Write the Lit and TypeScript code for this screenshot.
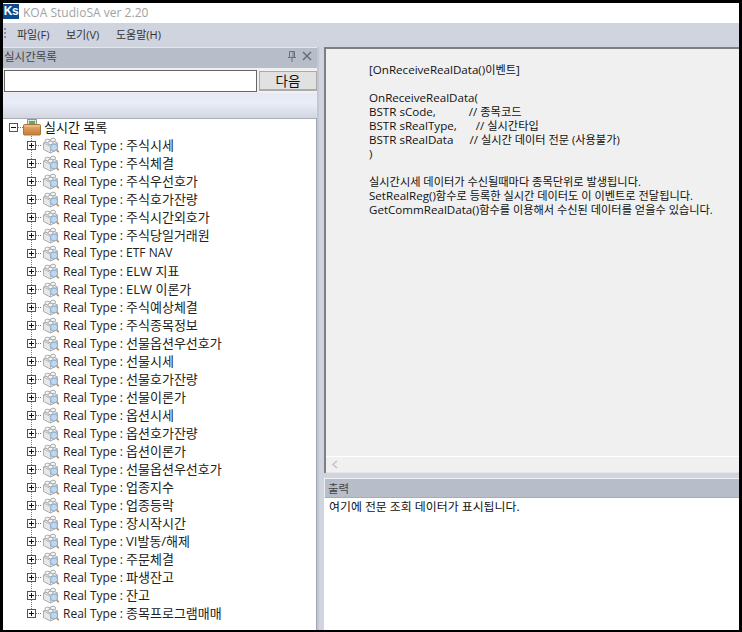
import { LitElement, html, css } from "lit";
import { customElement } from "lit/decorators.js";

const ITEMS = ["주식시세","주식체결","주식우선호가","주식호가잔량","주식시간외호가","주식당일거래원","ETF NAV","ELW 지표","ELW 이론가","주식예상체결","주식종목정보","선물옵션우선호가","선물시세","선물호가잔량","선물이론가","옵션시세","옵션호가잔량","옵션이론가","선물옵션우선호가","업종지수","업종등락","장시작시간","VI발동/해제","주문체결","파생잔고","잔고","종목프로그램매매"];

const gutter = (last: boolean) => html`<svg class="gutter" width="39" height="18" viewBox="0 0 39 18">
  <path d="M28.5 0V5M28.5 14V${last ? 14 : 18}M33 9.5H39" stroke="#777" stroke-dasharray="1 1" fill="none"/>
  <rect x="24.5" y="5.5" width="8" height="8" fill="#fff" stroke="#555"/>
  <path d="M26 9.5H31M28.5 7V12" stroke="#111" fill="none"/>
</svg>`;

const cube = html`<svg class="ic" width="18" height="18" viewBox="0 0 18 18">
  <path d="M1.5 7L8.5 3.5L15.5 7V13.5L8.5 17L1.5 13.5Z" fill="#e6e8ea" stroke="#a9abad"/>
  <path d="M1.5 7L8.5 10.5L15.5 7M8.5 10.5V17" fill="none" stroke="#b9bbbd"/>
  <ellipse cx="5.5" cy="5" rx="2.6" ry="1.8" fill="#f6f6f6" stroke="#a9abad"/>
  <ellipse cx="11" cy="4" rx="2.6" ry="1.8" fill="#f6f6f6" stroke="#a9abad"/>
  <ellipse cx="8.5" cy="7" rx="2.6" ry="1.8" fill="#f6f6f6" stroke="#a9abad"/>
  <circle cx="12" cy="11.5" r="3.6" fill="#bcd7f2" stroke="#8fa9c6"/>
  <path d="M14.8 14.3L16.8 16.3" stroke="#d3802c" stroke-width="1.6"/>
</svg>`;

const rootIcon = html`<svg class="ic" width="18" height="18" viewBox="0 0 18 18">
  <defs><linearGradient id="bx" x1="0" y1="0" x2="0" y2="1"><stop offset="0" stop-color="#e6ad6c"/><stop offset="1" stop-color="#c67c3c"/></linearGradient></defs>
  <rect x="4.5" y="1.5" width="9" height="8" fill="#dfe3e0" stroke="#8d9a8d"/>
  <rect x="6" y="3" width="6" height="5" fill="#58b05c"/>
  <rect x="0.5" y="6.5" width="17" height="10.5" rx="1" fill="url(#bx)" stroke="#a8753f"/>
  <path d="M1.5 8H16.5" stroke="#f3cd9c"/>
</svg>`;

const k = (t: string) => html`<span class="k">${t}</span>`;

@customElement("app-root")
export class AppRoot extends LitElement {
  static styles = css`
    :host { display: block; width: 742px; height: 632px; overflow: hidden;
      font-family: "Open Sans", "Noto Sans CJK KR", sans-serif; font-size: 12px; color: #111; }
    * { box-sizing: border-box; }
    .win { width: 742px; height: 632px; border: 3px solid #000; border-bottom-width: 2px;
      display: flex; flex-direction: column; background: #cfd4de; }
    .title { height: 20px; background: #fff; display: flex; align-items: center; gap: 4px; flex: none; }
    .logo { width: 16px; height: 15px; background: #0b4a8c; color: #fff; font: bold 12px "Liberation Sans", sans-serif;
      display: flex; align-items: center; justify-content: center; margin-top: -4px; letter-spacing: -.3px; }
    .title span.t { color: #a2a2a2; font-size: 12px; letter-spacing: .02px; margin-top: -2px; }
    .menu { height: 24px; flex: none; display: flex; align-items: center; color: #333; font-size: 11px; background: #cfd4de; padding-bottom: 2px; }
    .grip { width: 2px; height: 12px; margin-left: 1px; background: repeating-linear-gradient(#8a8f99 0 2px, transparent 2px 4px); }
    .mi { margin-left: 11px; width: 36px; white-space: nowrap; }
    .mi + .mi { margin-left: 13px; }
    .mi:last-child { margin-left: 14px; }
    .dh .s, .oh { font-size: 11.5px; }
    .main { flex: 1; display: flex; min-height: 0; }
    .dock { width: 316px; flex: none; display: flex; flex-direction: column; border-right: 2px solid #c2c7d2; }
    .dh { height: 21px; flex: none; background: #b8bec9; display: flex; align-items: center; padding: 0 5px 4px 1px; color: #444; border-top: 1px solid #e4e7ee; }
    .dh .s { flex: 1; }
    .dh svg { margin-left: 5px; }
    .search { height: 25px; flex: none; display: flex; align-items: center; background: #f0f0f0; padding-left: 1px; gap: 2px; }
    .inp { width: 253px; height: 22px; background: #fff; border: 1px solid #666; }
    .btn { width: 58px; height: 20px; background: #e1e1e1; border: 1px solid #aaa; border-width: 1px 1px 2px 1px; font-size: 13.5px; display: flex; align-items: center; justify-content: center; color: #111; }
    .bar { height: 25px; flex: none; background: linear-gradient(#e6eaf5, #e9edf8 40%, #d2d6e1); }
    .tree { flex: 1; background: #fff; box-shadow: inset 0 1px #a9adb6; border-right: 1px solid #a0a5b2; min-height: 0; overflow: hidden; }
    .row { height: 18px; display: flex; align-items: center; white-space: nowrap; }
    .gutter { flex: none; }
    .ic { flex: none; }
    .row .lb { margin-left: 3px; color: #222; line-height: 18px; }
    .row .k { font-size: 13px; }
    .rootrow .lb { margin-left: 3px; color: #111; }
    .split { width: 5px; flex: none; background: #cfd4de; }
    .right { flex: 1; display: flex; flex-direction: column; min-width: 0; }
    .doc { flex: 1; min-height: 0; display: flex; flex-direction: column; background: #f0f0f0; border-top: 2px solid #7f7f7f; border-left: 2px solid #7f7f7f; }
    .text { flex: 1; padding: 14px 0 0 43px; line-height: 14px; font-size: 11.6px; color: #111; white-space: pre; }
    .text .ln { display: block; height: 14px; }
    .text .k { font-size: 11.2px; }
    .text .cm .k { margin-left: 3px; }
    .sb { height: 17px; flex: none; border-top: 1px solid #fff; border-bottom: 1px solid #e4e4e4; display: flex; align-items: center; padding-left: 5px; }
    .gap { height: 5px; flex: none; background: #cfd4de; }
    .oh { height: 20px; flex: none; background: #b8bec9; border-top: 1px solid #eef0f4; border-left: 1px solid #eef0f4; border-bottom: 1px solid #a8acb8; padding-left: 3px; display: flex; align-items: center; color: #444; }
    .out { height: 132px; flex: none; background: #fff; padding: 1px 0 0 5px; font-size: 11.9px; line-height: 15px; color: #111; }
    .c1 { margin-left: 33px; } .c2 { margin-left: 19px; } .c3 { margin-left: 16px; }
  `;
  render() {
    return html`<div class="win">
      <div class="title"><div class="logo">Ks</div><span class="t">KOA StudioSA ver 2.20</span></div>
      <div class="menu"><div class="grip"></div><span class="mi">파일(F)</span><span class="mi">보기(V)</span><span class="mi">도움말(H)</span></div>
      <div class="main">
        <div class="dock">
          <div class="dh"><span class="s">실시간목록</span>
            <svg width="10" height="11" viewBox="0 0 10 11"><path d="M2.5 .5H7.5V6.5H2.5ZM6 1V6M1 6.5H9M5 7V11" fill="none" stroke="#6b6f78"/></svg>
            <svg width="10" height="10" viewBox="0 0 10 10"><path d="M1 1L9 9M9 1L1 9" stroke="#6b6f78" stroke-width="1.6"/></svg>
          </div>
          <div class="search"><div class="inp"></div><div class="btn">다음</div></div>
          <div class="bar"></div>
          <div class="tree">
            <div class="row rootrow"><svg class="gutter" width="20" height="18" viewBox="0 0 20 18">
              <rect x="6.5" y="5.5" width="8" height="8" fill="#fff" stroke="#555"/><path d="M8 9.5H13" stroke="#111"/><path d="M15 9.5H20" stroke="#777" stroke-dasharray="1 1"/></svg>${rootIcon}<span class="lb">${k("실시간 목록")}</span></div>
            ${ITEMS.map((t, i) => html`<div class="row">${gutter(i === ITEMS.length - 1)}${cube}<span class="lb">Real Type : ${/[가-힣]/.test(t) ? k(t) : t}</span></div>`)}
          </div>
        </div>
        <div class="split"></div>
        <div class="right">
          <div class="doc">
            <div class="text"><span class="ln">[OnReceiveRealData()${k("이벤트")}]</span><span class="ln"></span><span class="ln">OnReceiveRealData(</span><span class="ln">BSTR sCode,<span class="c1 cm">//${k("종목코드")}</span></span><span class="ln">BSTR sRealType,<span class="c2 cm">//${k("실시간타입")}</span></span><span class="ln">BSTR sRealData<span class="c3 cm">//${k("실시간 데이터 전문 (사용불가)")}</span></span><span class="ln">)</span><span class="ln"></span><span class="ln">${k("실시간시세 데이터가 수신될때마다 종목단위로 발생됩니다.")}</span><span class="ln">SetRealReg()${k("함수로 등록한 실시간 데이터도 이 이벤트로 전달됩니다.")}</span><span class="ln">GetCommRealData()${k("함수를 이용해서 수신된 데이터를 얻을수 있습니다.")}</span></div>
            <div class="sb"><svg width="8" height="9" viewBox="0 0 8 9"><path d="M6 1L2 4.5L6 8" fill="none" stroke="#c4c4c4" stroke-width="1.6"/></svg></div>
          </div>
          <div class="gap"></div>
          <div class="oh">출력</div>
          <div class="out">여기에 전문 조회 데이터가 표시됩니다.</div>
        </div>
      </div>
    </div>`;
  }
}
